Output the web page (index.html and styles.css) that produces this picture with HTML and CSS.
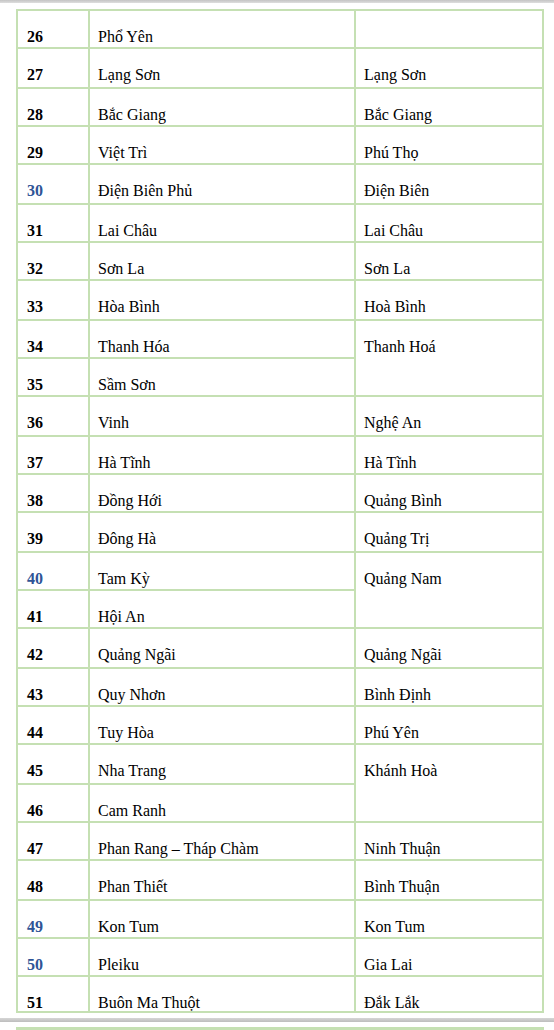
FILE: index.html
```html
<!DOCTYPE html>
<html lang="vi">
<head>
<meta charset="utf-8">
<link rel="stylesheet" href="styles.css">
</head>
<body>
<div class="topbar"></div>
<div class="grid">
  <div class="c n">26</div><div class="c">Phổ Yên</div><div class="c"></div>
  <div class="c n">27</div><div class="c">Lạng Sơn</div><div class="c">Lạng Sơn</div>
  <div class="c n">28</div><div class="c">Bắc Giang</div><div class="c">Bắc Giang</div>
  <div class="c n">29</div><div class="c">Việt Trì</div><div class="c">Phú Thọ</div>
  <div class="c n b">30</div><div class="c">Điện Biên Phủ</div><div class="c">Điện Biên</div>
  <div class="c n">31</div><div class="c">Lai Châu</div><div class="c">Lai Châu</div>
  <div class="c n">32</div><div class="c">Sơn La</div><div class="c">Sơn La</div>
  <div class="c n">33</div><div class="c">Hòa Bình</div><div class="c">Hoà Bình</div>
  <div class="c n">34</div><div class="c">Thanh Hóa</div><div class="c span2">Thanh Hoá</div>
  <div class="c n">35</div><div class="c">Sầm Sơn</div>
  <div class="c n">36</div><div class="c">Vinh</div><div class="c">Nghệ An</div>
  <div class="c n">37</div><div class="c">Hà Tĩnh</div><div class="c">Hà Tĩnh</div>
  <div class="c n">38</div><div class="c">Đồng Hới</div><div class="c">Quảng Bình</div>
  <div class="c n">39</div><div class="c">Đông Hà</div><div class="c">Quảng Trị</div>
  <div class="c n b">40</div><div class="c">Tam Kỳ</div><div class="c span2">Quảng Nam</div>
  <div class="c n">41</div><div class="c">Hội An</div>
  <div class="c n">42</div><div class="c">Quảng Ngãi</div><div class="c">Quảng Ngãi</div>
  <div class="c n">43</div><div class="c">Quy Nhơn</div><div class="c">Bình Định</div>
  <div class="c n">44</div><div class="c">Tuy Hòa</div><div class="c">Phú Yên</div>
  <div class="c n">45</div><div class="c">Nha Trang</div><div class="c span2">Khánh Hoà</div>
  <div class="c n">46</div><div class="c">Cam Ranh</div>
  <div class="c n">47</div><div class="c">Phan Rang – Tháp Chàm</div><div class="c">Ninh Thuận</div>
  <div class="c n">48</div><div class="c">Phan Thiết</div><div class="c">Bình Thuận</div>
  <div class="c n b">49</div><div class="c">Kon Tum</div><div class="c">Kon Tum</div>
  <div class="c n b">50</div><div class="c">Pleiku</div><div class="c">Gia Lai</div>
  <div class="c n">51</div><div class="c">Buôn Ma Thuột</div><div class="c">Đắk Lắk</div>
</div>
<div class="sep"></div>
<div class="nextline"></div>
</body>
</html>
```

FILE: styles.css
```css
html, body {
  margin: 0;
  padding: 0;
  background: #ffffff;
}
body {
  width: 554px;
  height: 1030px;
  overflow: hidden;
  font-family: "Liberation Serif", "Times New Roman", serif;
  color: #000;
}
.topbar {
  height: 3px;
  background: linear-gradient(#c4c4c4, #dedede);
}
.grid {
  margin: 6px 0 0 16px;
  width: 528px;
  height: 1004px;
  box-sizing: border-box;
  padding: 2px;
  background: #c5e0b3;
  display: grid;
  grid-template-columns: 70px 264px 186px;
  grid-template-rows:
    36px 38px 36px 36px 38px 36px 36px 38px 36px
    36px 38px 36px 36px 38px 36px 36px 38px 36px
    36px 38px 36px 36px 38px 36px 36px 34px;
  gap: 2px;
}
.c {
  background: #fff;
  font-size: 16px;
  line-height: 18px;
  padding: 17px 0 0 8px;
  white-space: nowrap;
  overflow: hidden;
}
.c.n {
  font-weight: bold;
  padding-left: 9px;
}
.c.b {
  color: #2f5496;
}
.span2 {
  grid-row: span 2;
}
.sep {
  margin-top: 5px;
  height: 4px;
  background: linear-gradient(#d6d6d6, #bdbdbd);
}
.nextline {
  margin: 5px 0 0 16px;
  width: 528px;
  height: 3px;
  background: #c5e0b3;
}
```
